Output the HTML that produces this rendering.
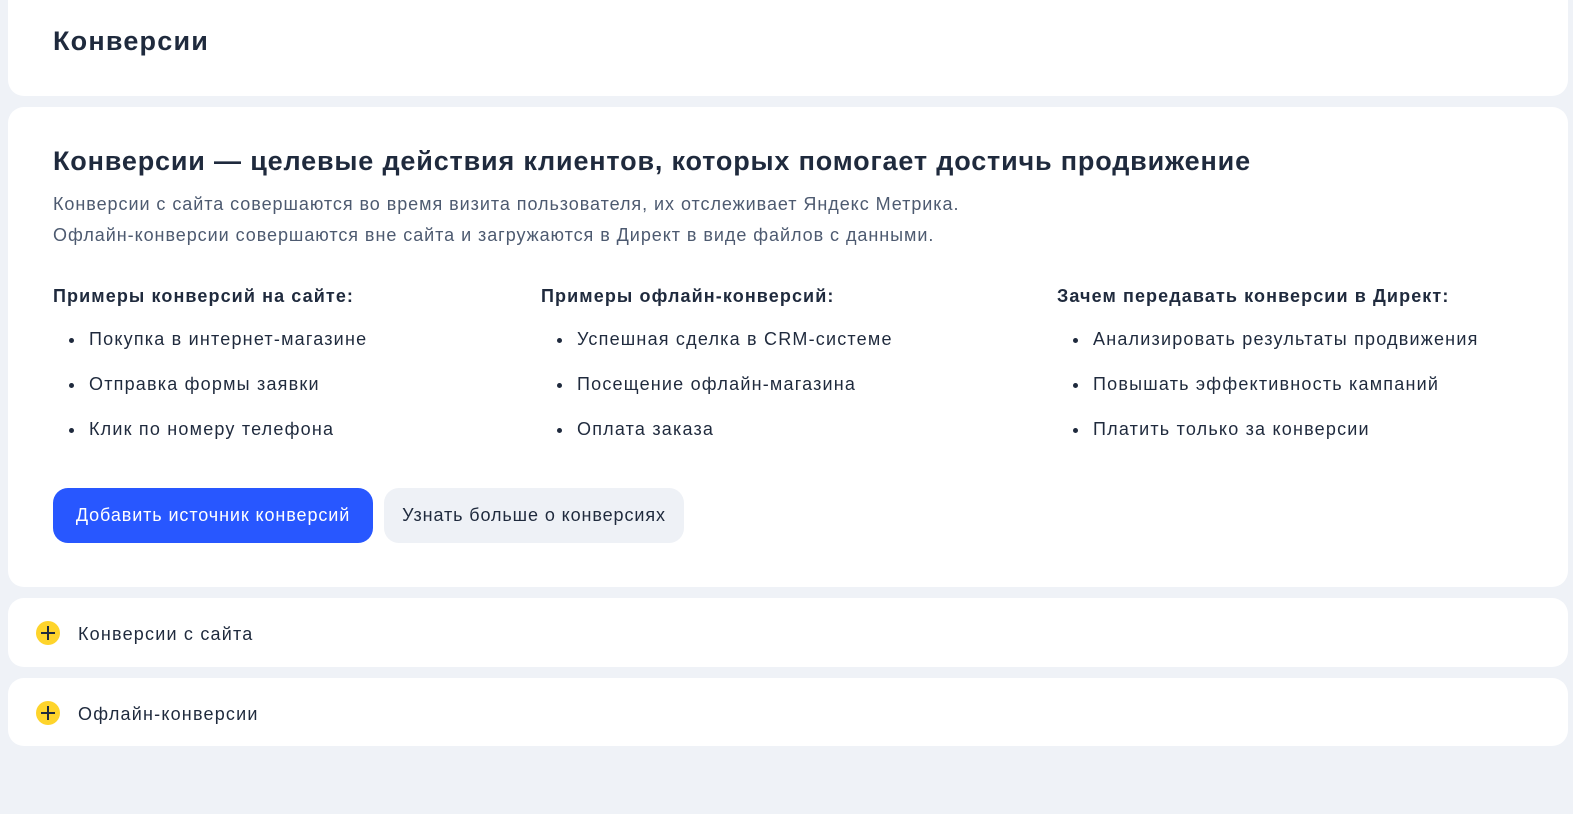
<!DOCTYPE html>
<html><head><meta charset="utf-8"><style>
body{margin:0;width:1573px;height:814px;background:#eff2f7;font-family:"Liberation Sans","Noto Sans CJK SC",sans-serif;color:#1f2a3d;position:relative;overflow:hidden}
.card{position:absolute;left:8px;right:5px;background:#fff;border-radius:16px}
h1{position:absolute;left:45px;margin:0;font-size:27px;font-weight:bold;letter-spacing:1.2px;color:#1f2a3d}
h2{position:absolute;left:45px;top:39px;margin:0;font-size:27px;font-weight:bold;letter-spacing:0.83px}
.sub{position:absolute;left:45px;top:82px;font-size:18px;line-height:31px;letter-spacing:0.95px;color:#4d5a70}
.col{position:absolute;top:179px;font-size:18px;letter-spacing:1.2px}
.col b{display:block;font-weight:bold;letter-spacing:1.1px;font-size:18px;color:#1f2a3d;margin-bottom:22px}
.col div{position:relative;padding-left:36px;height:45px;color:#1f2a3d}
.col div:before{content:"";position:absolute;left:16px;top:9px;width:5px;height:5px;border-radius:50%;background:#1f2a3d}
.btn{position:absolute;top:381px;height:55px;border-radius:15px;font-size:18px;letter-spacing:0.9px;line-height:55px;white-space:nowrap;text-align:center}
.acc{font-size:18px;letter-spacing:1.2px;position:absolute;left:70px;top:26px}
.plus{position:absolute;left:28px;top:23px;width:24px;height:24px;border-radius:50%;background:#fed42b}
.plus:before{content:"";position:absolute;left:5px;top:11px;width:14px;height:2px;background:#1f2a3d}
.plus:after{content:"";position:absolute;left:11px;top:5px;width:2px;height:14px;background:#1f2a3d}
</style></head><body>
<div class="card" style="top:-20px;height:116px"><h1 style="top:46px">Конверсии</h1></div>
<div class="card" style="top:107px;height:480px">
<h2>Конверсии — целевые действия клиентов, которых помогает достичь продвижение</h2>
<div class="sub">Конверсии с сайта совершаются во время визита пользователя, их отслеживает Яндекс Метрика.<br>Офлайн-конверсии совершаются вне сайта и загружаются в Директ в виде файлов с данными.</div>
<div class="col" style="left:45px"><b>Примеры конверсий на сайте:</b><div>Покупка в интернет-магазине</div><div>Отправка формы заявки</div><div>Клик по номеру телефона</div></div>
<div class="col" style="left:533px"><b>Примеры офлайн-конверсий:</b><div>Успешная сделка в CRM-системе</div><div>Посещение офлайн-магазина</div><div>Оплата заказа</div></div>
<div class="col" style="left:1049px"><b>Зачем передавать конверсии в Директ:</b><div>Анализировать результаты продвижения</div><div>Повышать эффективность кампаний</div><div>Платить только за конверсии</div></div>
<div class="btn" style="left:45px;width:320px;background:#2857ff;color:#fff">Добавить источник конверсий</div>
<div class="btn" style="left:376px;width:300px;background:#eef1f6;color:#1f2a3d">Узнать больше о конверсиях</div>
</div>
<div class="card" style="top:598px;height:69px"><span class="plus"></span><span class="acc">Конверсии с сайта</span></div>
<div class="card" style="top:678px;height:68px"><span class="plus"></span><span class="acc">Офлайн-конверсии</span></div>
</body></html>
